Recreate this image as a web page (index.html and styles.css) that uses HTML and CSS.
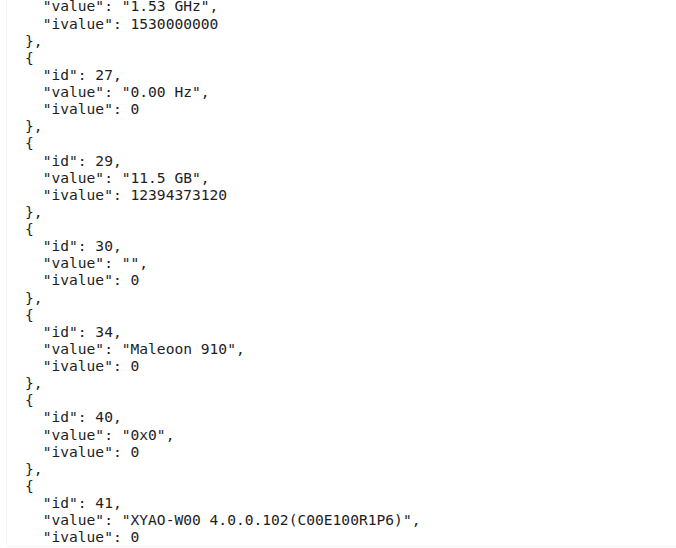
FILE: index.html
```html
<!DOCTYPE html>
<html>
<head>
<meta charset="utf-8">
<link rel="stylesheet" href="styles.css">
</head>
<body>
<div class="frame">
<pre class="json">    "value": "1.53 GHz",
    "ivalue": 1530000000
  },
  {
    "id": 27,
    "value": "0.00 Hz",
    "ivalue": 0
  },
  {
    "id": 29,
    "value": "11.5 GB",
    "ivalue": 12394373120
  },
  {
    "id": 30,
    "value": "",
    "ivalue": 0
  },
  {
    "id": 34,
    "value": "Maleoon 910",
    "ivalue": 0
  },
  {
    "id": 40,
    "value": "0x0",
    "ivalue": 0
  },
  {
    "id": 41,
    "value": "XYAO-W00 4.0.0.102(C00E100R1P6)",
    "ivalue": 0
  }</pre>
</div>
</body>
</html>
```
FILE: styles.css
```css
html, body {
  margin: 0;
  padding: 0;
  background: #ffffff;
  height: 548px;
  overflow: hidden;
}
.frame {
  margin-left: 6px;
  height: 546px;
  border-left: 1px solid #f4f4f4;
  border-bottom: 1px solid #f6f6f6;
  overflow: hidden;
}
.json {
  margin: -2.6px 0 0 0.5px;
  font-family: "DejaVu Sans Mono", monospace;
  font-size: 14.6px;
  line-height: 17.12px;
  color: #1e1e1e;
}
```
